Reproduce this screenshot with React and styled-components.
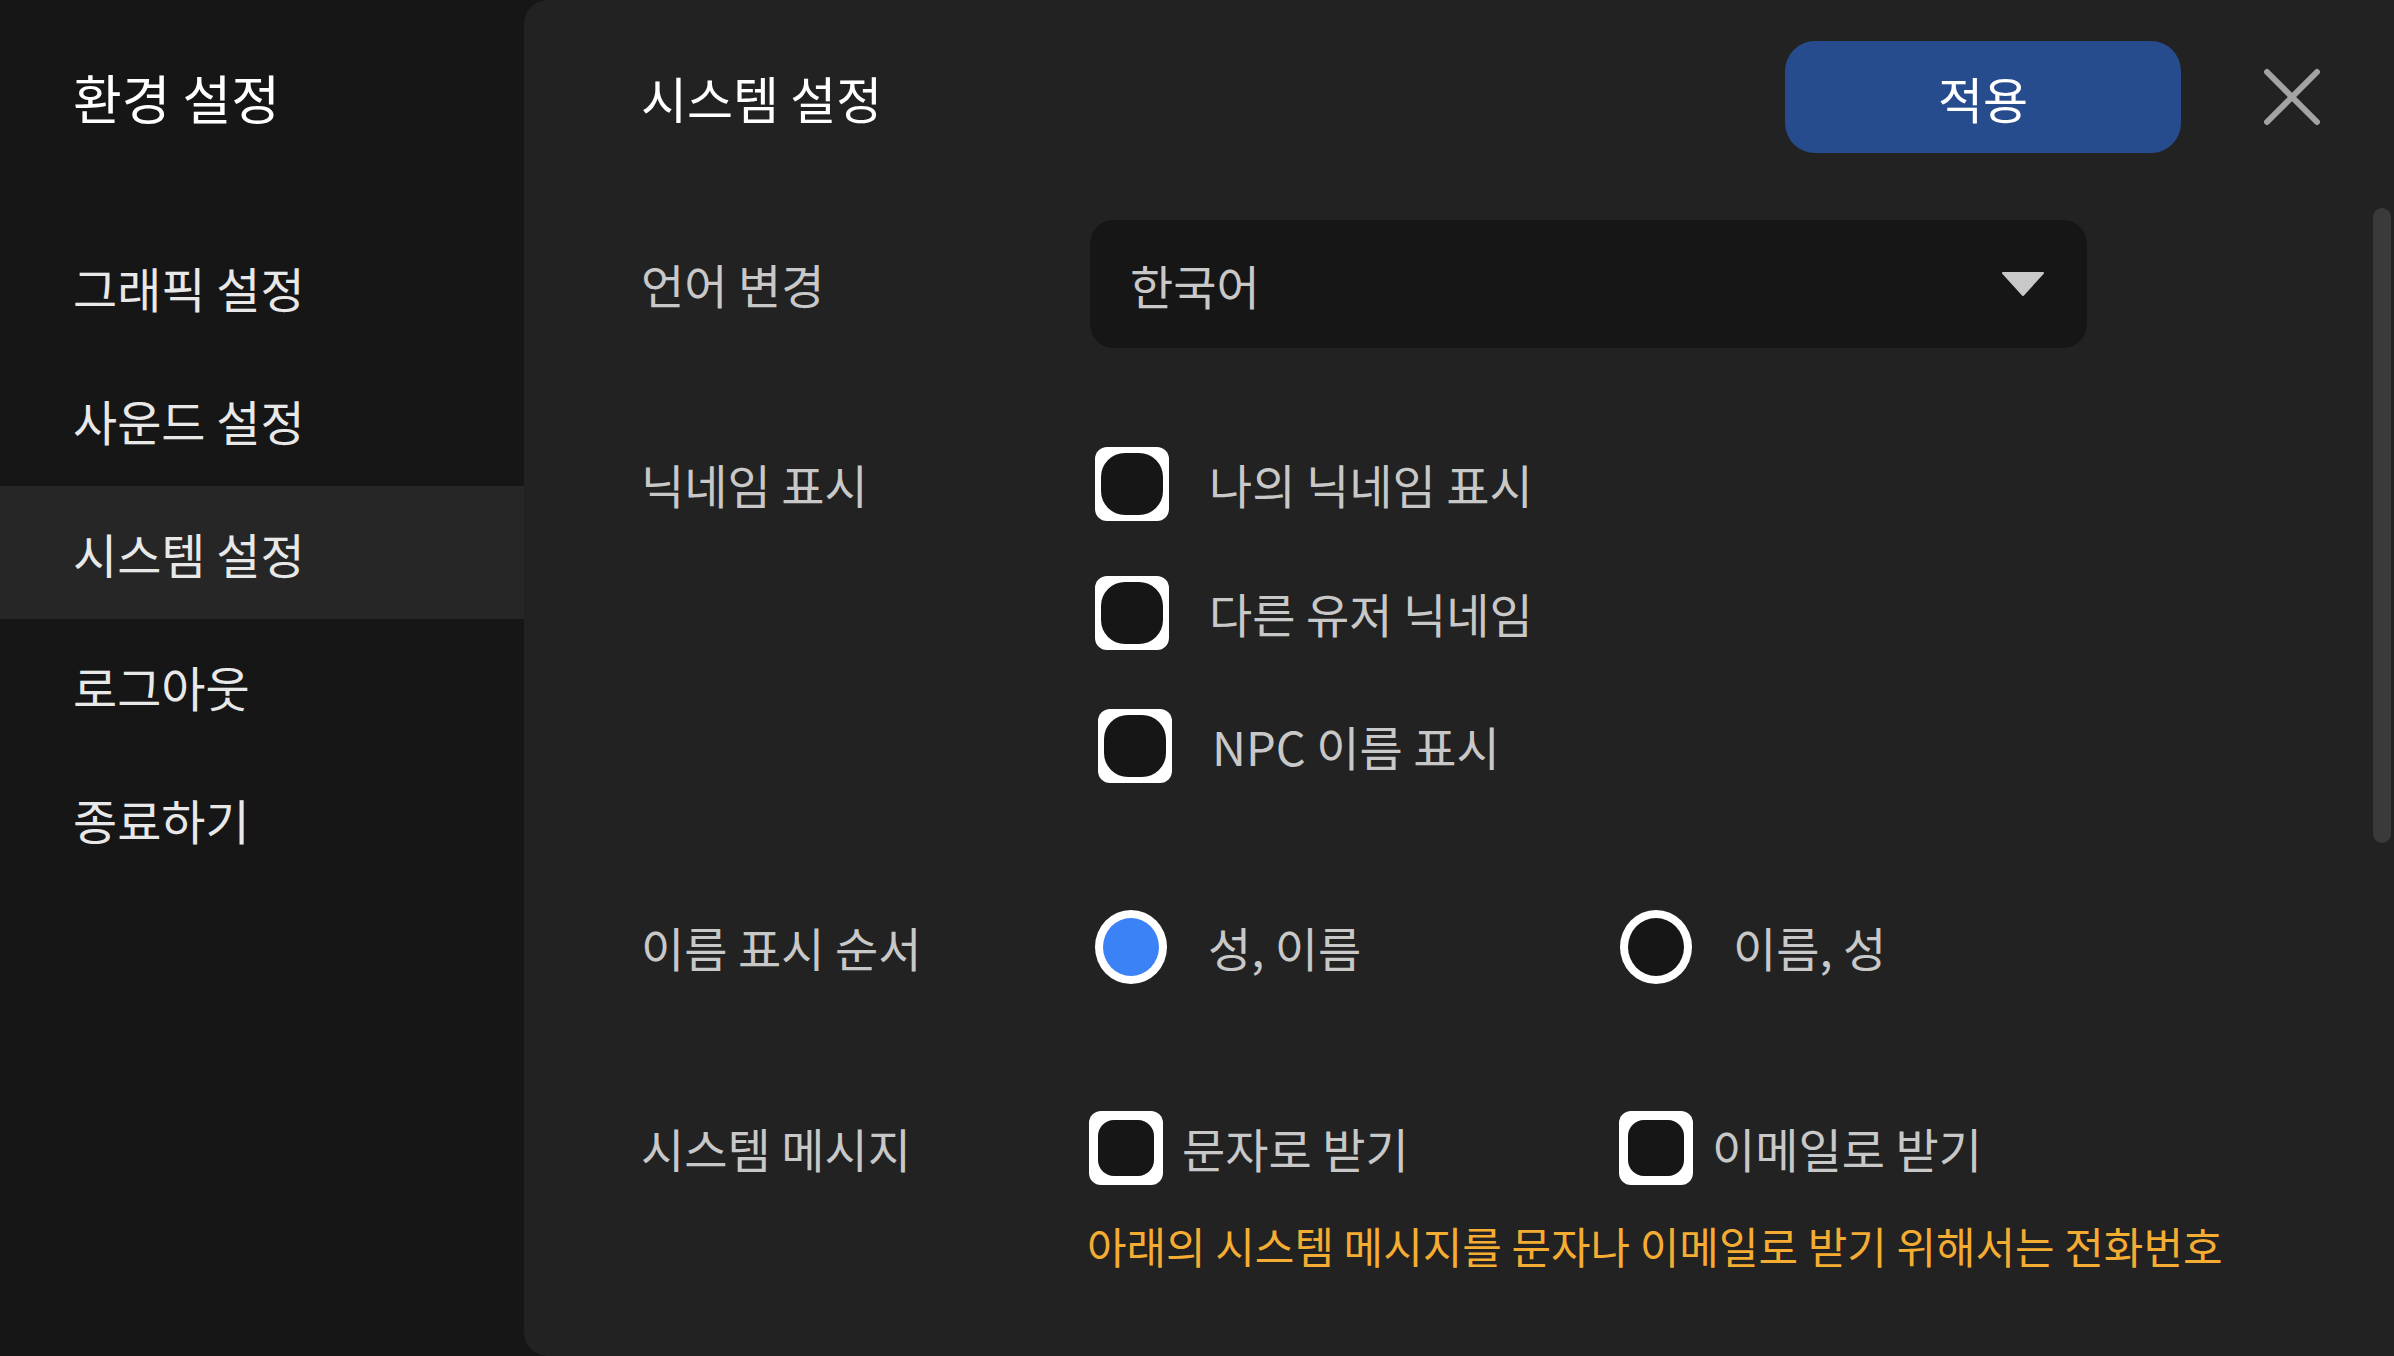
import React from 'react';
import styled, { createGlobalStyle } from 'styled-components';

const GlobalStyle = createGlobalStyle`
  html, body {
    margin: 0;
    padding: 0;
    background: #161616;
  }
  body {
    font-family: "Noto Sans CJK KR", "Noto Sans", sans-serif;
  }
`;

const MENU = ['그래픽 설정', '사운드 설정', '시스템 설정', '로그아웃', '종료하기'];

function Checkbox({ label, gap = 40, border = 6, radius = 24 }) {
  return (
    <Choice $gap={gap}>
      <Box $border={border}>
        <BoxInner $radius={radius} />
      </Box>
      <ChoiceText>{label}</ChoiceText>
    </Choice>
  );
}

function Radio({ label, checked }) {
  return (
    <Choice $gap={41}>
      <Ring>
        <Dot $checked={checked} />
      </Ring>
      <ChoiceText>{label}</ChoiceText>
    </Choice>
  );
}

function App() {
  return (
    <>
      <GlobalStyle />
      <Screen>
        <Sidebar>
          <SideTitle>환경 설정</SideTitle>
          <Menu>
            {MENU.map((item) => (
              <MenuItem key={item} $active={item === '시스템 설정'}>{item}</MenuItem>
            ))}
          </Menu>
        </Sidebar>

        <Panel>
          <Header>
            <Heading>시스템 설정</Heading>
            <ApplyButton>적용</ApplyButton>
            <CloseButton aria-label="close">
              <svg width="58" height="58" viewBox="0 0 58 58">
                <path d="M4 4 L54 54 M54 4 L4 54" stroke="#a3a3a3" strokeWidth="6" strokeLinecap="round" />
              </svg>
            </CloseButton>
          </Header>

          <Form>
            <Label $center>언어 변경</Label>
            <Select>
              <span>한국어</span>
              <svg width="44" height="26" viewBox="0 0 44 26">
                <path d="M2 2 L42 2 L22 24 Z" fill="#c8c8c8" stroke="#c8c8c8" strokeWidth="2" strokeLinejoin="round" />
              </svg>
            </Select>

            <Label $top={99}>닉네임 표시</Label>
            <Stack $top={99}>
              <Checkbox label="나의 닉네임 표시" />
              <Checkbox label="다른 유저 닉네임" />
              <Indent>
                <Checkbox label="NPC 이름 표시" />
              </Indent>
            </Stack>

            <Label $top={127}>이름 표시 순서</Label>
            <Pair $top={127} $col={525}>
              <Radio label="성, 이름" checked />
              <Radio label="이름, 성" />
            </Pair>

            <Label $top={127}>시스템 메시지</Label>
            <Column $top={127}>
              <Pair $col={530} $shift={-6}>
                <Checkbox label="문자로 받기" gap={19} border={9} radius={16} />
                <Checkbox label="이메일로 받기" gap={19} border={9} radius={16} />
              </Pair>
              <Notice>아래의 시스템 메시지를 문자나 이메일로 받기 위해서는 전화번호</Notice>
            </Column>
          </Form>

          <Scrollbar />
        </Panel>
      </Screen>
    </>
  );
}

const Screen = styled.div`
  display: flex;
  width: 100%;
  height: 100vh;
  overflow: hidden;
  background: #161616;
`;

const Sidebar = styled.aside`
  width: 524px;
  flex-shrink: 0;
  padding-top: 41px;
  box-sizing: border-box;
  background: #161616;
`;

const SideTitle = styled.h1`
  margin: 0;
  height: 112px;
  line-height: 112px;
  padding-left: 73px;
  font-size: 53px;
  font-weight: 400;
  color: #ffffff;
`;

const Menu = styled.nav`
  margin-top: 67px;
  display: flex;
  flex-direction: column;
`;

const MenuItem = styled.div`
  height: 133px;
  display: flex;
  align-items: center;
  padding-left: 73px;
  font-size: 48px;
  color: #e8e8e8;
  background: ${(p) => (p.$active ? '#262626' : 'transparent')};
`;

const Panel = styled.main`
  position: relative;
  flex: 1;
  background: #222222;
  border-radius: 24px 0 0 24px;
  padding: 41px 0 0 117px;
  box-sizing: border-box;
`;

const Header = styled.header`
  display: flex;
  align-items: center;
  height: 112px;
`;

const Heading = styled.h2`
  margin: 0;
  font-size: 50px;
  font-weight: 400;
  color: #ffffff;
`;

const ApplyButton = styled.button`
  margin-left: auto;
  width: 396px;
  height: 112px;
  border: none;
  border-radius: 30px;
  background: #274c8e;
  color: #ffffff;
  font-family: inherit;
  font-size: 49px;
  font-weight: 400;
`;

const CloseButton = styled.button`
  margin: 0 73px 0 82px;
  padding: 0;
  width: 58px;
  height: 58px;
  border: none;
  background: none;
  display: flex;
`;

const Form = styled.section`
  display: grid;
  grid-template-columns: 449px 1fr;
  margin-top: 67px;
`;

const Label = styled.div`
  margin-top: ${(p) => p.$top || 0}px;
  align-self: ${(p) => (p.$center ? 'center' : 'start')};
  line-height: 74px;
  font-size: 47px;
  color: #c8c8c8;
`;

const Select = styled.div`
  width: 997px;
  height: 128px;
  box-sizing: border-box;
  display: flex;
  align-items: center;
  justify-content: space-between;
  padding: 0 42px 0 40px;
  border-radius: 24px;
  background: #161616;
  font-size: 47px;
  color: #c8c8c8;
`;

const Stack = styled.div`
  margin-top: ${(p) => p.$top || 0}px;
  display: flex;
  flex-direction: column;
  gap: 55px;
  padding-left: 5px;
`;

const Indent = styled.div`
  padding-left: 3px;
  margin-top: 4px;
`;

const Column = styled.div`
  margin-top: ${(p) => p.$top || 0}px;
  display: flex;
  flex-direction: column;
`;

const Pair = styled.div`
  margin-top: ${(p) => p.$top || 0}px;
  margin-left: ${(p) => (p.$shift || 0) + 5}px;
  display: grid;
  grid-template-columns: ${(p) => p.$col}px auto;
  justify-content: start;
`;

const Choice = styled.label`
  display: flex;
  align-items: center;
  gap: ${(p) => p.$gap}px;
`;

const ChoiceText = styled.span`
  font-size: 47px;
  line-height: 74px;
  color: #c8c8c8;
`;

const Box = styled.span`
  width: 74px;
  height: 74px;
  box-sizing: border-box;
  padding: ${(p) => p.$border}px;
  border-radius: 12px;
  background: #ffffff;
  display: flex;
`;

const BoxInner = styled.span`
  flex: 1;
  border-radius: ${(p) => p.$radius}px;
  background: #161616;
`;

const Ring = styled.span`
  width: 72px;
  height: 74px;
  box-sizing: border-box;
  padding: 8px;
  border-radius: 50%;
  background: #ffffff;
  display: flex;
`;

const Dot = styled.span`
  flex: 1;
  border-radius: 50%;
  background: ${(p) => (p.$checked ? '#3b82f6' : '#161616')};
`;

const Notice = styled.p`
  margin: 30px 0 0 -3px;
  font-size: 43px;
  line-height: 60px;
  color: #f5ac32;
  white-space: nowrap;
`;

const Scrollbar = styled.div`
  position: absolute;
  top: 208px;
  right: 3px;
  width: 18px;
  height: 635px;
  border-radius: 9px;
  background: #3a3a3a;
`;

export default App;
